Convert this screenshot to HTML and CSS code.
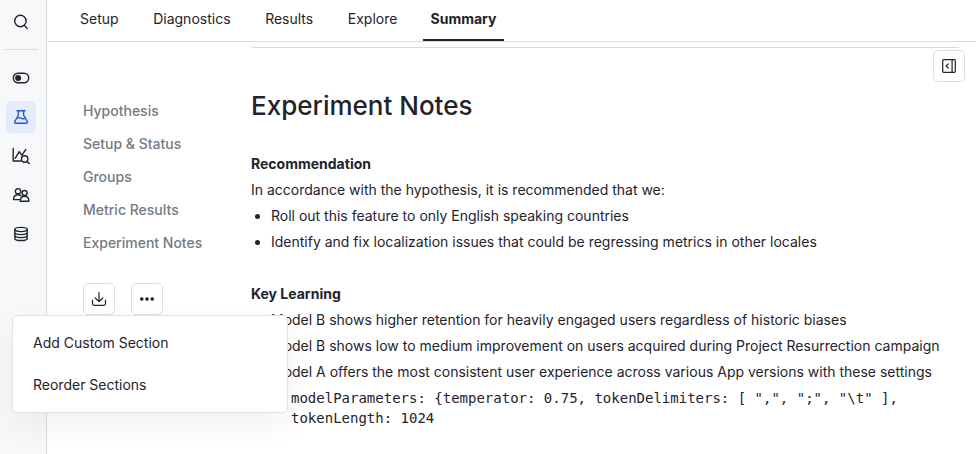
FILE: index.html
```html
<!DOCTYPE html>
<html lang="en">
<head>
    <meta charset="UTF-8">
    <meta name="viewport" content="width=device-width, initial-scale=1.0">
    <title>Experiment Summary</title>
    <link rel="stylesheet" href="styles.css">
</head>
<body>
    <div class="app">
        <aside class="sidebar">
            <a class="nav-icon search">
                <svg width="16" height="16" viewBox="0 0 16 16"><circle cx="7.4" cy="7" r="5.7"/><path d="M11.3 11.3L14.3 14.6"/></svg>
            </a>
            <div class="divider"></div>
            <a class="nav-icon">
                <svg width="18" height="16" viewBox="0 0 18 16"><rect x="1.3" y="3.2" width="15.4" height="9.6" rx="4.8"/><circle class="fill" cx="6.1" cy="8" r="2.3"/></svg>
            </a>
            <a class="nav-icon active">
                <svg width="16" height="16" viewBox="0 0 16 16"><path d="M4 1.7H12M5.4 1.7V6L1.9 12.3Q1.1 14.3 3.2 14.3H12.8Q14.9 14.3 14.1 12.3L10.6 6V1.7M3.7 9.2Q6 8 8 9.2T12.3 9.2"/></svg>
            </a>
            <a class="nav-icon">
                <svg width="18" height="18" viewBox="0 0 18 18"><path d="M1.2 1.5V14H8.6M3.2 11.3L7.2 4.7L10 8.2L13.7 2.6M15 14.4L17.2 16.6"/><circle cx="12.7" cy="12" r="3.2"/></svg>
            </a>
            <a class="nav-icon">
                <svg width="18" height="16" viewBox="0 0 18 16"><circle cx="6" cy="4.3" r="2.7"/><circle cx="12.6" cy="6" r="2.5"/><path d="M7.3 12.6H1.5Q1.5 7.8 6 7.8Q7.7 7.8 8.8 8.8M8.3 14.3Q8.3 9.3 12.6 9.3T16.9 14.3Z"/></svg>
            </a>
            <a class="nav-icon">
                <svg width="16" height="16" viewBox="0 0 16 16"><ellipse cx="8" cy="3.5" rx="6.2" ry="2.1"/><path d="M1.8 3.5V12.4C1.8 15.2 14.2 15.2 14.2 12.4V3.5M1.8 6.5C1.8 9.3 14.2 9.3 14.2 6.5M1.8 9.5C1.8 12.3 14.2 12.3 14.2 9.5"/></svg>
            </a>
        </aside>

        <div class="page">
            <nav class="tabs">
                <a class="tab">Setup</a>
                <a class="tab">Diagnostics</a>
                <a class="tab">Results</a>
                <a class="tab">Explore</a>
                <a class="tab selected">Summary</a>
            </nav>

            <div class="body">
                <div class="outline">
                    <a>Hypothesis</a>
                    <a>Setup &amp; Status</a>
                    <a>Groups</a>
                    <a>Metric Results</a>
                    <a>Experiment Notes</a>
                    <div class="actions">
                        <button class="icon-btn" aria-label="Download">
                            <svg width="16" height="16" viewBox="0 0 16 16"><path d="M8 1.5V10.4M4.3 7L8 10.6L11.7 7M1.5 9V12.6Q1.5 14.4 3.3 14.4H12.7Q14.5 14.4 14.5 12.6V9"/></svg>
                        </button>
                        <button class="icon-btn" aria-label="More">
                            <svg width="16" height="16" viewBox="0 0 16 16"><circle class="fill" cx="2.8" cy="8" r="1.2"/><circle class="fill" cx="8" cy="8" r="1.2"/><circle class="fill" cx="13.2" cy="8" r="1.2"/></svg>
                        </button>
                        <div class="menu">
                            <a>Add Custom Section</a>
                            <a>Reorder Sections</a>
                        </div>
                    </div>
                </div>

                <main class="notes">
                    <h1>Experiment Notes</h1>
                    <h2>Recommendation</h2>
                    <p>In accordance with the hypothesis, it is recommended that we:</p>
                    <ul>
                        <li>Roll out this feature to only English speaking countries</li>
                        <li>Identify and fix localization issues that could be regressing metrics in other locales</li>
                    </ul>
                    <h2>Key Learning</h2>
                    <ul>
                        <li>Model B shows higher retention for heavily engaged users regardless of historic biases</li>
                        <li>Model B shows low to medium improvement on users acquired during Project Resurrection campaign</li>
                        <li>Model A offers the most consistent user experience across various App versions with these settings
                            <code>modelParameters: {temperator: 0.75, tokenDelimiters: [ ",", ";", "\t" ], tokenLength: 1024</code>
                        </li>
                    </ul>
                </main>

                <button class="icon-btn panel-toggle" aria-label="Open panel">
                    <svg width="16" height="16" viewBox="0 0 16 16"><rect x="1.7" y="1.7" width="12.6" height="12.6" rx="1"/><path d="M11.1 1.7V14.3M7.3 5.8L5.1 8L7.3 10.2"/></svg>
                </button>
            </div>
        </div>
    </div>
</body>
</html>
```
FILE: styles.css
```css
* {
    box-sizing: border-box;
}
body {
    margin: 0;
    font-family: Inter, sans-serif;
    font-size: 14px;
    line-height: 20px;
    color: #1f232b;
    background-color: #ffffff;
    overflow: hidden;
}
svg {
    display: block;
    fill: none;
    stroke: currentColor;
    stroke-width: 1.4;
    stroke-linecap: round;
    stroke-linejoin: round;
}
.fill {
    fill: currentColor;
}
.app {
    display: flex;
    height: 454px;
}
.sidebar {
    display: flex;
    flex-direction: column;
    align-items: center;
    gap: 7px;
    width: 47px;
    padding: 6px 5px 0 0;
    background-color: #f7f8fa;
    border-right: 1px solid #d9dbe0;
}
.nav-icon {
    display: flex;
    align-items: center;
    justify-content: center;
    width: 30px;
    height: 32px;
    border-radius: 5px;
}
.divider {
    width: 34px;
    height: 1px;
    margin: 4px 0 5px;
    background-color: #d9dbe0;
}
.active {
    color: #2457d6;
    background-color: #e4ecfc;
}
.page {
    flex: 1;
    min-width: 0;
}
.tabs {
    display: flex;
    gap: 18.6px;
    height: 42px;
    padding-left: 25px;
    border-bottom: 1px solid #d9dbe0;
}
.tab {
    padding: 9px 8px 0;
    border-bottom: 2px solid transparent;
}
.selected {
    margin-left: -1.5px;
    font-weight: 700;
    border-bottom-color: #1f232b;
}
.body {
    position: relative;
    display: flex;
    padding: 5px 17px 0 36px;
}
.outline {
    display: flex;
    flex-direction: column;
    gap: 13px;
    width: 168px;
    padding-top: 54px;
    color: #737985;
    font-weight: 500;
}
.actions {
    position: relative;
    display: flex;
    gap: 16px;
    margin-top: 17px;
}
.icon-btn {
    display: flex;
    align-items: center;
    justify-content: center;
    width: 32px;
    height: 32px;
    padding: 0;
    color: #1f232b;
    background-color: #ffffff;
    border: 1px solid #dcdee6;
    border-radius: 5px;
}
.icon-btn svg {
    stroke-width: 1.2;
}
.menu {
    position: absolute;
    top: 32px;
    left: -71px;
    width: 276px;
    padding: 6px 20px;
    color: #1f232b;
    font-weight: 400;
    background-color: #ffffff;
    border: 1px solid #e0e2e9;
    border-radius: 5px;
    box-shadow: 0 12px 32px rgba(0, 0, 0, 0.06);
    z-index: 2;
}
.menu a {
    display: block;
    padding: 11px 0;
}
.notes {
    flex: 1;
    border-top: 1px solid #d9dbe0;
}
h1 {
    margin: 42px 0 32px;
    font-size: 26px;
    font-weight: 500;
    line-height: 32px;
}
h2 {
    margin: 0;
    font-size: 14px;
    font-weight: 700;
}
p {
    margin: 6px 0;
}
ul {
    margin: 6px 0 32px;
    padding-left: 20px;
}
li {
    margin-bottom: 6px;
}
code {
    display: block;
    margin-top: 6px;
    padding-left: 20px;
    font-family: "DejaVu Sans Mono", monospace;
    font-size: 14px;
}
.panel-toggle {
    position: absolute;
    top: 8px;
    right: 11px;
}
```
